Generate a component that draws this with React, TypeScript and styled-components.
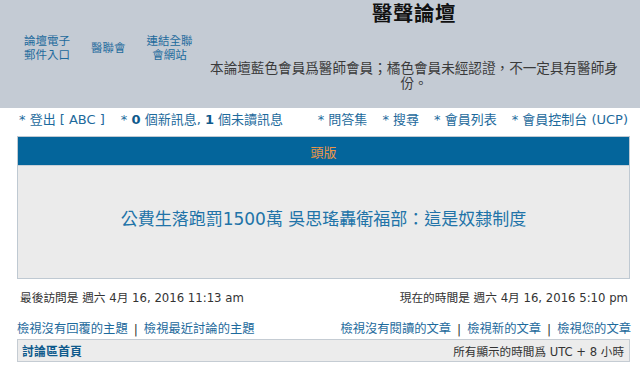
import React from "react";
import styled, { createGlobalStyle } from "styled-components";

const Global = createGlobalStyle`
  html, body { margin: 0; padding: 0; background: #ffffff; }
  body {
    width: 640px;
    font-family: "DejaVu Sans", "Noto Sans CJK TC", sans-serif;
    color: #333333;
    font-size: 12px;
  }
  a { text-decoration: none; }
`;

const Header = styled.header`
  height: 108px;
  background: #c4cbd4;
  display: grid;
  grid-template-columns: 200px 1fr;
`;

const QuickLinks = styled.nav`
  display: flex;
  align-items: center;
  gap: 21px;
  padding-left: 24px;
  padding-bottom: 13px;
`;

const QuickLink = styled.a`
  color: #1d6a9c;
  font-size: 11.5px;
  line-height: 14px;
  text-align: center;
`;

const TitleCell = styled.div`
  display: flex;
  flex-direction: column;
  align-items: center;
  padding-right: 12px;
`;

const SiteTitle = styled.h1`
  margin: 2px 0 0 0;
  font-size: 20.5px;
  line-height: 24px;
  font-weight: bold;
  color: #111111;
  letter-spacing: 0.5px;
`;

const Description = styled.p`
  margin: 35px 0 0 0;
  width: 416px;
  text-align: center;
  font-size: 13.6px;
  line-height: 15px;
  color: #3a3a3a;
`;

const NavBar = styled.div`
  height: 22px;
  display: flex;
  align-items: center;
  justify-content: space-between;
  padding: 0 12px 0 19px;
  margin-top: -1px;
`;

const NavGroup = styled.div<{ $gap: number }>`
  display: flex;
  gap: ${(p) => p.$gap}px;
`;

const NavItem = styled.a`
  color: #1d6a9c;
  font-size: 13px;
  white-space: nowrap;
  b { color: #0f5a8c; }
`;

const Box = styled.section`
  margin: 7px 10px 0 17px;
  border: 1px solid #bfc9d2;
  background: #ebebeb;
`;

const BoxHead = styled.div`
  height: 28px;
  background: #04659b;
  border-bottom: 1px solid #c8d0d8;
  display: flex;
  align-items: center;
  justify-content: center;
  color: #ec9646;
  font-size: 13px;
`;

const BoxBody = styled.div`
  height: 112px;
  display: flex;
  align-items: center;
  justify-content: center;
`;

const Headline = styled.a`
  color: #2173a8;
  font-size: 17px;
  margin-bottom: 9px;
`;

const InfoRow = styled.div`
  display: flex;
  justify-content: space-between;
  padding: 0 12px 0 20px;
  margin-top: 9px;
  font-size: 11.7px;
  color: #333333;
  height: 16px;
  align-items: center;
`;

const LinkRow = styled.div`
  display: flex;
  justify-content: space-between;
  padding: 0 9px 0 17px;
  margin-top: 16px;
  font-size: 12.3px;
  height: 16px;
  align-items: center;
`;

const Links = styled.div`
  color: #444;
  white-space: nowrap;
  a { color: #1d6a9c; }
`;

const Sep = styled.span`
  color: #333;
  margin: 0 6px;
`;

const Crumbs = styled.div`
  margin: 3px 10px 0 17px;
  height: 21px;
  border: 1px solid #c5ccd3;
  background: #ececec;
  display: flex;
  align-items: center;
  justify-content: space-between;
  padding: 0 5px 0 4px;
  font-size: 12px;
`;

const Home = styled.a`
  color: #0f5a8c;
  font-weight: bold;
`;

const TZ = styled.span`
  color: #333;
  font-size: 11.6px;
`;

export default function App() {
  return (
    <>
      <Global />
      <Header>
        <QuickLinks>
          <QuickLink href="#">論壇電子<br />郵件入口</QuickLink>
          <QuickLink href="#">醫聯會</QuickLink>
          <QuickLink href="#">連結全聯<br />會網站</QuickLink>
        </QuickLinks>
        <TitleCell>
          <SiteTitle>醫聲論壇</SiteTitle>
          <Description>本論壇藍色會員爲醫師會員；橘色會員未經認證，不一定具有醫師身份。</Description>
        </TitleCell>
      </Header>
      <NavBar>
        <NavGroup $gap={16}>
          <NavItem href="#">* 登出 [ ABC ]</NavItem>
          <NavItem href="#">* <b>0</b> 個新訊息, <b>1</b> 個未讀訊息</NavItem>
        </NavGroup>
        <NavGroup $gap={15}>
          <NavItem href="#">* 問答集</NavItem>
          <NavItem href="#">* 搜尋</NavItem>
          <NavItem href="#">* 會員列表</NavItem>
          <NavItem href="#">* 會員控制台 (UCP)</NavItem>
        </NavGroup>
      </NavBar>
      <Box>
        <BoxHead>頭版</BoxHead>
        <BoxBody>
          <Headline href="#">公費生落跑罰1500萬 吳思瑤轟衛福部：這是奴隸制度</Headline>
        </BoxBody>
      </Box>
      <InfoRow>
        <span>最後訪問是 週六 4月 16, 2016 11:13 am</span>
        <span>現在的時間是 週六 4月 16, 2016 5:10 pm</span>
      </InfoRow>
      <LinkRow>
        <Links>
          <a href="#">檢視沒有回覆的主題</a><Sep>|</Sep><a href="#">檢視最近討論的主題</a>
        </Links>
        <Links>
          <a href="#">檢視沒有閱讀的文章</a><Sep>|</Sep><a href="#">檢視新的文章</a><Sep>|</Sep><a href="#">檢視您的文章</a>
        </Links>
      </LinkRow>
      <Crumbs>
        <Home href="#">討論區首頁</Home>
        <TZ>所有顯示的時間爲 UTC + 8 小時</TZ>
      </Crumbs>
    </>
  );
}
